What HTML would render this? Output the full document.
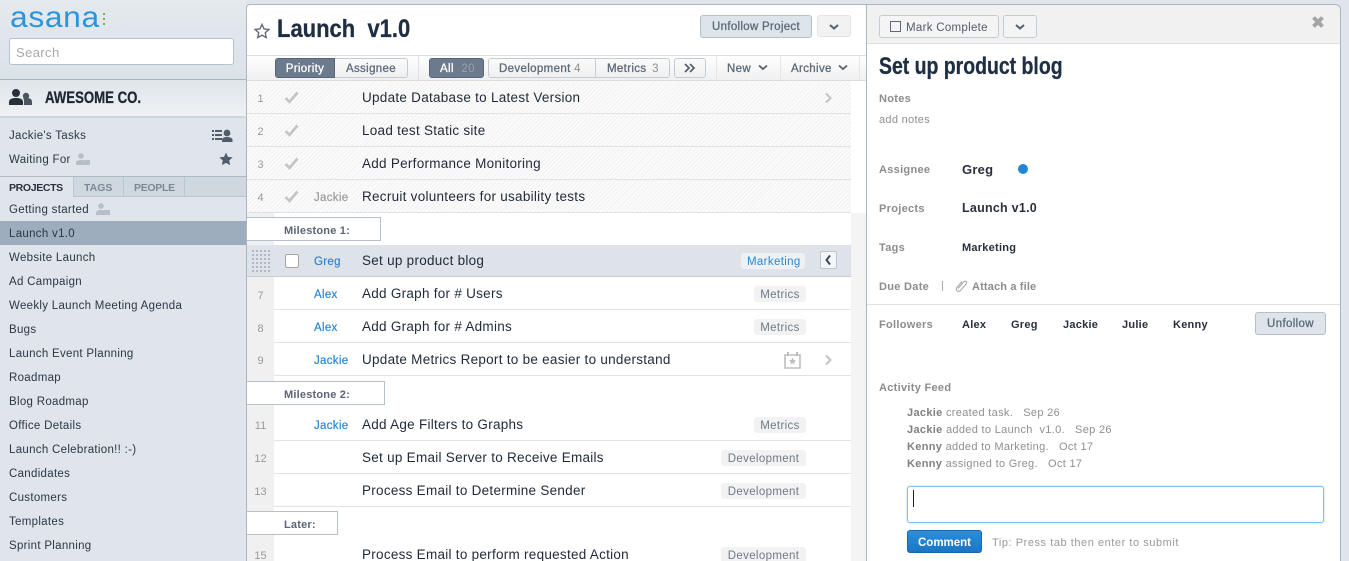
<!DOCTYPE html>
<html><head><meta charset="utf-8"><style>
html{margin:0;padding:0;height:561px;overflow:hidden}
body{margin:0;padding:0;width:1349px;height:561px;overflow:hidden;position:relative;background:#dfe5eb;font-family:"Liberation Sans",sans-serif;color:#273444;font-size:12px}
div,span.a,svg{position:absolute}
.t{position:absolute;white-space:nowrap;line-height:22px;height:20px}
.s{font-size:11.5px;left:9px;color:#2b3745;letter-spacing:.3px}
.r{font-size:13.5px;left:362px;color:#1f2a38;letter-spacing:.27px}
.n{font-size:11px;color:#999;left:247px;width:27px;text-align:center;line-height:20px}
.as{font-size:11.5px;left:314px;color:#2a86d0;font-weight:400;letter-spacing:.3px;-webkit-text-stroke:.2px}
.line{height:1px;left:247px;width:604px;background:#e2e2e2}
.tag{background:#f2f2f2;border-radius:3px;height:16px;line-height:18px;font-size:11.5px;color:#6d7a8a;padding:0 6px;text-align:center;white-space:nowrap;letter-spacing:.35px}
.hatch{left:247px;width:604px;height:32px;background:repeating-linear-gradient(135deg,#f1f1f1 0,#f1f1f1 1px,#fbfbfb 1px,#fbfbfb 3px)}
.gut{left:247px;width:27px;background:#f0f0f0}
.btn{border:1px solid #c3ccd6;border-radius:3px;box-sizing:border-box;background:linear-gradient(#fafafa,#f0f0f0);color:#5d6a7a;font-weight:normal;-webkit-text-stroke:.3px;letter-spacing:.35px;font-size:11.5px;text-align:center;white-space:nowrap}
.lab{font-size:11px;left:879px;color:#8c8c8c;font-weight:bold;letter-spacing:.3px}
.v{font-size:11px;color:#27303c;font-weight:bold;letter-spacing:.25px}
.ms{background:#fff;border:1px solid #b3c0ce;border-left:none;box-sizing:border-box;left:247px;color:#5a6675;font-size:11px;font-weight:bold;letter-spacing:.2px}
.feed{font-size:11px;color:#8f8f8f;left:907px;letter-spacing:.32px}
.feed b{color:#808080}
</style></head><body>

<!-- Sidebar -->
<div style="left:0;top:0;width:246px;height:79px;background:linear-gradient(#e4e9ee,#dbe2e8)"></div>
<span class="t" style="left:10px;top:8px;font-size:30px;line-height:20px;color:#2a95dc;letter-spacing:.6px;transform:scaleX(1.06);transform-origin:left">asana</span>
<div style="left:103px;top:13px;width:2px;height:2px;background:#5cc33c"></div>
<div style="left:103px;top:18px;width:2px;height:2px;background:#5cc33c"></div>
<div style="left:103px;top:23px;width:2px;height:2px;background:#5cc33c"></div>
<div style="left:9px;top:38px;width:225px;height:27px;background:#fff;border:1px solid #b6c2ce;border-radius:3px;box-sizing:border-box"></div>
<span class="t" style="left:16px;top:42px;font-size:13px;color:#a9a9a9;letter-spacing:.4px">Search</span>
<div style="left:0;top:79px;width:246px;height:1px;background:#a9b5c2"></div>
<div style="left:0;top:80px;width:246px;height:36px;background:linear-gradient(#dfe5ea,#eef1f4)"></div>
<div style="left:0;top:116px;width:246px;height:2px;background:#cfd6dd"></div>
<svg style="left:9px;top:88px" width="23" height="18" viewBox="0 0 23 18"><circle cx="7" cy="5" r="4" fill="#273038"/><path d="M0 17v-3c0-3 3-4 7-4s7 1 7 4v3z" fill="#273038"/><circle cx="17" cy="8" r="3.2" fill="#4a5560"/><path d="M15 17v-3c0-2 0-3-1-4h4c3 0 5 1 5 4v3z" fill="#4a5560"/></svg>
<span class="t" style="left:45px;top:87px;font-size:16.5px;font-weight:bold;color:#1f2732;transform:scaleX(.8);transform-origin:left;-webkit-text-stroke:.3px">AWESOME CO.</span>

<span class="t s" style="top:125px">Jackie's Tasks</span>
<svg style="left:212px;top:129px" width="21" height="13" viewBox="0 0 21 13"><g fill="#4f5c6b"><rect x="0" y="1" width="2" height="2"/><rect x="3" y="1" width="7" height="2"/><rect x="0" y="5" width="2" height="2"/><rect x="3" y="5" width="7" height="2"/><rect x="0" y="9" width="2" height="2"/><rect x="3" y="9" width="7" height="2"/><circle cx="15" cy="4" r="3.4"/><path d="M10 13v-2c0-2 2-3 5-3s5.500 1 5.500 3v2z"/></g></svg>
<span class="t s" style="top:149px">Waiting For</span>
<svg style="left:76px;top:153px" width="14" height="12" viewBox="0 0 14 12"><g fill="#b5bfc9"><circle cx="5" cy="3" r="2.800"/><path d="M0 12v-2c0-2 2-3 5-3 2 0 4 .5 4 2v3z"/><rect x="8" y="7" width="6" height="5"/></g></svg>
<svg style="left:219px;top:152px" width="14" height="14" viewBox="0 0 24 24"><path d="M12 1l3.400 7.300 8 .9-5.900 5.400 1.600 7.900L12 18.600l-7.100 3.900 1.600-7.900L.6 9.200l8-.9z" fill="#4f5c6b"/></svg>

<div style="left:0;top:176px;width:246px;height:1px;background:#aebac6"></div>
<div style="left:73px;top:177px;width:173px;height:20px;background:#cfd7df"></div>
<div style="left:73px;top:177px;width:1px;height:20px;background:#bcc6d0"></div>
<div style="left:123px;top:177px;width:1px;height:19px;background:#bcc6d0"></div>
<div style="left:184px;top:177px;width:1px;height:19px;background:#bcc6d0"></div>
<div style="left:74px;top:196px;width:172px;height:1px;background:#bcc6d0"></div>
<span class="t" style="left:9px;top:177px;font-size:10.5px;font-weight:bold;color:#273240;letter-spacing:-.35px">PROJECTS</span>
<span class="t" style="left:84px;top:177px;font-size:10.5px;font-weight:bold;color:#7b8897">TAGS</span>
<span class="t" style="left:134px;top:177px;font-size:10.5px;font-weight:bold;color:#7b8897;letter-spacing:-.3px">PEOPLE</span>

<div style="left:0;top:221px;width:246px;height:24px;background:#9dadbe"></div>
<span class="t s" style="top:199px">Getting started</span>
<svg style="left:96px;top:203px" width="14" height="12" viewBox="0 0 14 12"><g fill="#b5bfc9"><circle cx="5" cy="3" r="2.800"/><path d="M0 12v-2c0-2 2-3 5-3 2 0 4 .5 4 2v3z"/><rect x="8" y="7" width="6" height="5"/></g></svg>
<span class="t s" style="top:223px">Launch v1.0</span>
<span class="t s" style="top:247px">Website Launch</span>
<span class="t s" style="top:271px">Ad Campaign</span>
<span class="t s" style="top:295px">Weekly Launch Meeting Agenda</span>
<span class="t s" style="top:319px">Bugs</span>
<span class="t s" style="top:343px">Launch Event Planning</span>
<span class="t s" style="top:367px">Roadmap</span>
<span class="t s" style="top:391px">Blog Roadmap</span>
<span class="t s" style="top:415px">Office Details</span>
<span class="t s" style="top:439px">Launch Celebration!! :-)</span>
<span class="t s" style="top:463px">Candidates</span>
<span class="t s" style="top:487px">Customers</span>
<span class="t s" style="top:511px">Templates</span>
<span class="t s" style="top:535px">Sprint Planning</span>

<!-- Main panel -->
<div style="left:246px;top:4px;width:621px;height:557px;background:#fff;border:1px solid #a9b6c4;border-bottom:none;border-radius:4px 0 0 0;box-sizing:border-box"></div>
<svg style="left:254px;top:23px" width="16" height="16" viewBox="0 0 24 24"><path d="M12 2l3 6.800 7.400.8-5.500 5 1.500 7.300L12 18.300l-6.400 3.600 1.500-7.300-5.500-5 7.400-.8z" fill="none" stroke="#5b6672" stroke-width="2"/></svg>
<span class="t" style="left:277px;top:19px;font-size:25px;line-height:20px;height:20px;font-weight:bold;color:#1f2f43;transform:scaleX(.88);transform-origin:left;white-space:pre;-webkit-text-stroke:.3px">Launch  v1.0</span>
<div class="btn" style="left:700px;top:15px;width:112px;height:23px;line-height:23px;background:#dde4ea;border-color:#b3bfcb;letter-spacing:.3px">Unfollow Project</div>
<div class="btn" style="left:817px;top:15px;width:34px;height:22px;border-color:#e4e4e4;background:#f2f2f2"></div>
<svg style="left:828px;top:23px" width="12" height="8" viewBox="0 0 12 8"><path d="M2 2l4 3.500L10 2" fill="none" stroke="#56616e" stroke-width="2"/></svg>

<div style="left:247px;top:55px;width:619px;height:26px;background:linear-gradient(#fff,#f0f0f0);border-top:1px solid #dedede;border-bottom:1px solid #dcdcdc;box-sizing:border-box"></div>
<div class="btn" style="left:275px;top:58px;width:60px;height:20px;line-height:20px;background:#6b7a8d;border-color:#56657a;color:#fff;border-radius:3px 0 0 3px">Priority</div>
<div class="btn" style="left:335px;top:58px;width:73px;height:20px;line-height:20px;border-radius:0 3px 3px 0;border-left:none">Assignee</div>
<div style="left:418px;top:56px;width:1px;height:24px;background:#e0e0e0"></div>
<div class="btn" style="left:429px;top:58px;width:55px;height:20px;line-height:20px;background:#6b7a8d;border-color:#56657a;color:#fff;text-align:left;padding-left:10px">All <span style="color:#98a3b0;margin-left:4px;-webkit-text-stroke:0">20</span></div>
<div class="btn" style="left:488px;top:58px;width:108px;height:20px;line-height:20px;border-radius:3px 0 0 3px;text-align:left;padding-left:10px">Development <span style="color:#8e8e8e;-webkit-text-stroke:0">4</span></div>
<div class="btn" style="left:595px;top:58px;width:75px;height:20px;line-height:20px;border-radius:0 3px 3px 0;text-align:left;padding-left:11px">Metrics <span style="color:#8e8e8e;margin-left:2px;-webkit-text-stroke:0">3</span></div>
<div class="btn" style="left:674px;top:58px;width:32px;height:20px"></div>
<svg style="left:684px;top:63px" width="12" height="10" viewBox="0 0 12 10"><path d="M1 1l4 4-4 4M6 1l4 4-4 4" fill="none" stroke="#56616e" stroke-width="1.800"/></svg>
<div style="left:716px;top:56px;width:1px;height:24px;background:#e6e6e6"></div>
<div style="left:780px;top:56px;width:1px;height:24px;background:#e6e6e6"></div>
<div style="left:859px;top:56px;width:1px;height:24px;background:#e6e6e6"></div>
<span class="t" style="left:727px;top:58px;font-size:11.5px;color:#5d6a7a;-webkit-text-stroke:.3px;letter-spacing:.35px">New</span>
<svg style="left:757px;top:64px" width="12" height="8" viewBox="0 0 12 8"><path d="M2 1.500l4 3.500 4-3.500" fill="none" stroke="#56616e" stroke-width="1.800"/></svg>
<span class="t" style="left:791px;top:58px;font-size:11.5px;color:#5d6a7a;-webkit-text-stroke:.3px;letter-spacing:.35px">Archive</span>
<svg style="left:837px;top:64px" width="12" height="8" viewBox="0 0 12 8"><path d="M2 1.500l4 3.500 4-3.500" fill="none" stroke="#56616e" stroke-width="1.800"/></svg>

<!-- Gutter -->
<div style="left:851px;top:213px;width:15px;height:348px;background:#f4f4f4"></div>
<div class="gut" style="top:213px;height:348px"></div>

<!-- hatched rows -->
<div class="hatch" style="top:81px"></div>
<div class="hatch" style="top:114px"></div>
<div class="hatch" style="top:147px"></div>
<div class="hatch" style="top:180px"></div>
<div class="line" style="top:113px"></div>
<div class="line" style="top:146px"></div>
<div class="line" style="top:179px"></div>
<div class="line" style="top:212px"></div>
<span class="t n" style="top:89px">1</span>
<span class="t n" style="top:122px">2</span>
<span class="t n" style="top:155px">3</span>
<span class="t n" style="top:188px">4</span>
<svg style="left:284px;top:91px" width="15" height="13" viewBox="0 0 15 13"><path d="M1.500 7l4 4L13.500 1.500" fill="none" stroke="#c4c4c4" stroke-width="2.600"/></svg>
<svg style="left:284px;top:124px" width="15" height="13" viewBox="0 0 15 13"><path d="M1.500 7l4 4L13.500 1.500" fill="none" stroke="#c4c4c4" stroke-width="2.600"/></svg>
<svg style="left:284px;top:157px" width="15" height="13" viewBox="0 0 15 13"><path d="M1.500 7l4 4L13.500 1.500" fill="none" stroke="#c4c4c4" stroke-width="2.600"/></svg>
<svg style="left:284px;top:190px" width="15" height="13" viewBox="0 0 15 13"><path d="M1.500 7l4 4L13.500 1.500" fill="none" stroke="#c4c4c4" stroke-width="2.600"/></svg>
<span class="t r" style="top:87px">Update Database to Latest Version</span>
<span class="t r" style="top:120px">Load test Static site</span>
<span class="t r" style="top:153px">Add Performance Monitoring</span>
<span class="t as" style="top:187px;color:#999">Jackie</span>
<span class="t r" style="top:186px">Recruit volunteers for usability tests</span>
<svg style="left:824px;top:92px" width="9" height="12" viewBox="0 0 9 12"><path d="M2 1.500L6.500 6 2 10.500" fill="none" stroke="#c4c4c4" stroke-width="2"/></svg>

<!-- Milestone 1 -->
<div class="t ms" style="top:217px;width:134px;height:24px;line-height:27px;padding-left:37px">Milestone 1:</div>

<!-- Selected row -->
<div style="left:247px;top:245px;width:604px;height:32px;background:#dde3e9;border-bottom:1px solid #c6ccd2;box-sizing:border-box"></div>
<div style="left:251px;top:249px;width:19px;height:23px;background-image:radial-gradient(#b0b8c0 1.100px,transparent 1.200px);background-size:4px 4px"></div>
<div style="left:285px;top:254px;width:14px;height:14px;background:#fff;border:1px solid #a5a5a5;border-radius:2px;box-sizing:border-box"></div>
<span class="t as" style="top:251px">Greg</span>
<span class="t r" style="top:250px">Set up product blog</span>
<div class="tag" style="left:741px;top:253px;width:52px;background:#eef1f4;color:#2a86d0;font-size:11.5px">Marketing</div>
<div style="left:820px;top:251px;width:17px;height:18px;background:#f4f5f6;border:1px solid #bcc6d0;border-radius:2px;box-sizing:border-box"></div>
<svg style="left:824px;top:254px" width="9" height="12" viewBox="0 0 9 12"><path d="M6 1.500L2.500 6 6 10.500" fill="none" stroke="#3f4a56" stroke-width="2"/></svg>

<!-- rows -->
<div class="line" style="left:274px;width:577px;top:309px"></div>
<div class="line" style="left:274px;width:577px;top:342px"></div>
<div class="line" style="left:274px;width:577px;top:375px"></div>
<span class="t n" style="top:286px">7</span>
<span class="t as" style="top:284px">Alex</span>
<span class="t r" style="top:283px">Add Graph for # Users</span>
<div class="tag" style="left:754px;top:286px;width:40px">Metrics</div>
<span class="t n" style="top:319px">8</span>
<span class="t as" style="top:317px">Alex</span>
<span class="t r" style="top:316px">Add Graph for # Admins</span>
<div class="tag" style="left:754px;top:319px;width:40px">Metrics</div>
<span class="t n" style="top:351px">9</span>
<span class="t as" style="top:350px">Jackie</span>
<span class="t r" style="top:349px">Update Metrics Report to be easier to understand</span>
<svg style="left:784px;top:352px" width="17" height="17" viewBox="0 0 17 17"><path d="M1 3h15v13H1z" fill="none" stroke="#bdbdbd" stroke-width="1.600"/><path d="M4 0v4M13 0v4" stroke="#bdbdbd" stroke-width="2"/><path d="M8.500 5.500l1.100 2.400 2.500.3-1.900 1.700.6 2.500-2.300-1.300-2.300 1.300.6-2.500-1.900-1.700 2.500-.3z" fill="#bdbdbd"/></svg>
<svg style="left:824px;top:354px" width="9" height="12" viewBox="0 0 9 12"><path d="M2 1.500L6.500 6 2 10.500" fill="none" stroke="#c4c4c4" stroke-width="2"/></svg>

<div class="t ms" style="top:381px;width:138px;height:24px;line-height:26px;padding-left:37px">Milestone 2:</div>

<div class="line" style="left:274px;width:577px;top:440px"></div>
<div class="line" style="left:274px;width:577px;top:473px"></div>
<div class="line" style="left:274px;width:577px;top:506px"></div>
<span class="t n" style="top:416px">11</span>
<span class="t as" style="top:415px">Jackie</span>
<span class="t r" style="top:414px">Add Age Filters to Graphs</span>
<div class="tag" style="left:754px;top:417px;width:40px">Metrics</div>
<span class="t n" style="top:449px">12</span>
<span class="t r" style="top:447px">Set up Email Server to Receive Emails</span>
<div class="tag" style="left:721px;top:450px;width:73px">Development</div>
<span class="t n" style="top:482px">13</span>
<span class="t r" style="top:480px">Process Email to Determine Sender</span>
<div class="tag" style="left:721px;top:483px;width:73px">Development</div>

<div class="t ms" style="top:511px;width:91px;height:24px;line-height:26px;padding-left:37px">Later:</div>

<span class="t n" style="top:546px">15</span>
<span class="t r" style="top:544px">Process Email to perform requested Action</span>
<div class="tag" style="left:721px;top:547px;width:73px">Development</div>

<!-- Right panel -->
<div style="left:866px;top:4px;width:475px;height:557px;background:#fff;border:1px solid #a9b6c4;border-bottom:none;border-radius:0 6px 0 0;box-sizing:border-box"></div>
<div style="left:867px;top:5px;width:473px;height:39px;background:#f1f1f1;border-bottom:1px solid #dfdfdf;box-sizing:border-box;border-radius:0 5px 0 0"></div>
<div class="btn" style="left:879px;top:15px;width:120px;height:23px;line-height:24px;background:#f4f4f4;text-align:left;padding-left:26px;letter-spacing:.3px;-webkit-text-stroke:0;color:#4f5c6b">Mark Complete</div>
<div style="left:890px;top:21px;width:11px;height:11px;border:1.500px solid #5d6a7a;box-sizing:border-box"></div>
<div class="btn" style="left:1003px;top:15px;width:34px;height:23px;background:#f4f4f4"></div>
<svg style="left:1014px;top:23px" width="12" height="8" viewBox="0 0 12 8"><path d="M2 2l4 3.500L10 2" fill="none" stroke="#56616e" stroke-width="2"/></svg>
<svg style="left:1311px;top:15px" width="14" height="14" viewBox="0 0 14 14"><path d="M2.500 2.500l9 9M11.500 2.500l-9 9" stroke="#a5a5a5" stroke-width="4"/></svg>
<span class="t" style="left:879px;top:56px;font-size:24px;font-weight:bold;color:#1f2f43;transform:scaleX(.81);transform-origin:left;-webkit-text-stroke:.3px">Set up product blog</span>
<span class="t lab" style="top:88px">Notes</span>
<span class="t" style="left:879px;top:109px;font-size:11px;color:#8f8f8f;letter-spacing:.3px">add notes</span>
<span class="t lab" style="top:159px">Assignee</span>
<span class="t v" style="left:962px;top:159px;font-size:13px">Greg</span>
<div style="left:1018px;top:164px;width:10px;height:10px;border-radius:50%;background:#1f86d8"></div>
<span class="t lab" style="top:198px">Projects</span>
<span class="t v" style="left:962px;top:197px;font-size:12.5px">Launch v1.0</span>
<span class="t lab" style="top:237px">Tags</span>
<span class="t v" style="left:962px;top:237px">Marketing</span>
<span class="t lab" style="top:276px">Due Date</span>
<div style="left:942px;top:281px;width:1px;height:10px;background:#bbaaa5"></div>
<svg style="left:954px;top:279px" width="15" height="14" viewBox="0 0 15 14"><path d="M4 9.500l5.500-6.500c1.500-1.700 4-.2 2.800 1.700L6.500 11.500C5 13.300 1.500 12 2.500 9L8 2.500" fill="none" stroke="#aaa" stroke-width="1.100"/></svg>
<span class="t lab" style="left:972px;top:276px;letter-spacing:.15px">Attach a file</span>
<div style="left:867px;top:304px;width:473px;height:1px;background:#e0e0e0"></div>
<span class="t lab" style="top:314px">Followers</span>
<span class="t v" style="left:962px;top:314px">Alex</span>
<span class="t v" style="left:1011px;top:314px">Greg</span>
<span class="t v" style="left:1063px;top:314px">Jackie</span>
<span class="t v" style="left:1122px;top:314px">Julie</span>
<span class="t v" style="left:1173px;top:314px">Kenny</span>
<div class="btn" style="left:1255px;top:312px;width:71px;height:23px;line-height:23px;background:#dde4ea;border-color:#b3bfcb">Unfollow</div>
<span class="t lab" style="top:377px">Activity Feed</span>
<span class="t feed" style="top:402px"><b>Jackie</b> created task. &nbsp; Sep 26</span>
<span class="t feed" style="top:419px"><b>Jackie</b> added to Launch&nbsp; v1.0. &nbsp; Sep 26</span>
<span class="t feed" style="top:436px"><b>Kenny</b> added to Marketing. &nbsp; Oct 17</span>
<span class="t feed" style="top:453px"><b>Kenny</b> assigned to Greg. &nbsp; Oct 17</span>
<div style="left:907px;top:486px;width:417px;height:37px;background:#fff;border:1px solid #7fc1ee;border-radius:3px;box-sizing:border-box;box-shadow:0 0 2px #a9d8f5"></div>
<div style="left:913px;top:490px;width:1px;height:17px;background:#222"></div>
<div style="left:907px;top:530px;width:75px;height:23px;line-height:24px;background:linear-gradient(#2a8fdc,#1a76c4);border:1px solid #1868ad;border-radius:3px;box-sizing:border-box;color:#fff;font-weight:bold;font-size:11.5px;text-align:center">Comment</div>
<span class="t" style="left:992px;top:532px;font-size:11px;color:#999;letter-spacing:.55px">Tip: Press tab then enter to submit</span>
</body></html>
